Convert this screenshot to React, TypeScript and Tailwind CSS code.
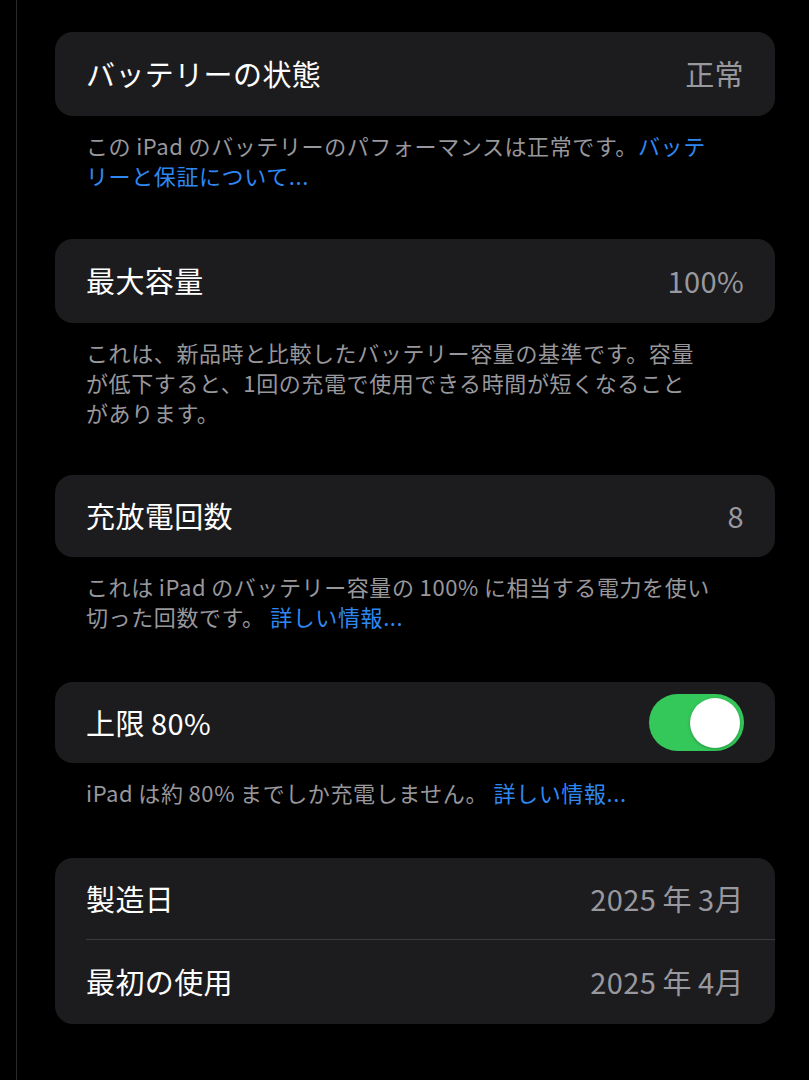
import React from "react"

const font = { fontFamily: '"Noto Sans CJK JP", "Noto Sans", sans-serif' }

// thin space, iOS puts one between Japanese and Latin runs
const sp = "\u2009"

interface RowProps {
	label: string
	value?: string
	right?: React.ReactNode
}

// one line inside a grouped card
const Row: React.FC<RowProps> = ({ label, value, right }) => (
	<div className="flex items-center justify-between h-full pl-[31px] pr-[31px]">
		<span className="text-[29px] text-white tracking-[0.4px]">{label}</span>
		{right ?? <span className="text-[29px] text-[#98989e] tracking-[0.4px]">{value}</span>}
	</div>
)

const Card: React.FC<{ children: React.ReactNode; h?: string }> = ({ children, h = "h-[84px]" }) => (
	<div className={`bg-[#1c1c1e] rounded-[18px] ${h}`}>{children}</div>
)

const Footer: React.FC<{ children: React.ReactNode; mb?: string }> = ({ children, mb = "mb-[49px]" }) => (
	<p className={`pl-[31px] pt-[14px] text-[22px] tracking-[0.6px] leading-[30px] text-[#97979c] ${mb}`}>{children}</p>
)

const Link: React.FC<{ children: React.ReactNode }> = ({ children }) => (
	<span className="text-[#2f88f2]">{children}</span>
)

const Toggle = () => (
	<div className="w-[95px] h-[57px] rounded-full bg-[#34c759] flex items-center justify-end pr-[4px]">
		<div className="w-[50px] h-[50px] rounded-full bg-white shadow-[0_1px_3px_rgba(0,0,0,0.25)]" />
	</div>
)

export default function App() {
	return (
		<div className="w-[809px] h-[1080px] bg-black flex overflow-hidden" style={font}>
			<div className="w-[16px] shrink-0" />
			<div className="w-[1px] bg-[#2a2a2a] shrink-0" />
			<div className="w-[720px] ml-[38px] pt-[32px] flex flex-col">
				<Card>
					<Row label="バッテリーの状態" value="正常" />
				</Card>
				<Footer>
					この{sp}iPad{sp}のバッテリーのパフォーマンスは正常です。<Link>バッテ</Link>
					<br />
					<Link>リーと保証について...</Link>
				</Footer>

				<Card>
					<Row label="最大容量" value="100%" />
				</Card>
				<Footer mb="mb-[48px]">
					これは、新品時と比較したバッテリー容量の基準です。容量
					<br />
					が低下すると、1回の充電で使用できる時間が短くなること
					<br />
					があります。
				</Footer>

				<Card h="h-[82px]">
					<Row label="充放電回数" value="8" />
				</Card>
				<Footer mb="mb-[51px]">
					これは{sp}iPad{sp}のバッテリー容量の{sp}100%{sp}に相当する電力を使い
					<br />
					切った回数です。 <Link>詳しい情報...</Link>
				</Footer>

				<Card h="h-[81px]">
					<Row label={`上限${sp}80%`} right={<Toggle />} />
				</Card>
				<Footer mb="mb-[51px]">
					iPad{sp}は約{sp}80%{sp}までしか充電しません。 <Link>詳しい情報...</Link>
				</Footer>

				<div className="bg-[#1c1c1e] rounded-[18px] flex flex-col">
					<div className="h-[81px]">
						<Row label="製造日" value={`2025${sp}年${sp}3月`} />
					</div>
					<div className="ml-[31px] h-[1px] bg-[#3a3a3c]" />
					<div className="h-[84px]">
						<Row label="最初の使用" value={`2025${sp}年${sp}4月`} />
					</div>
				</div>
			</div>
		</div>
	)
}
